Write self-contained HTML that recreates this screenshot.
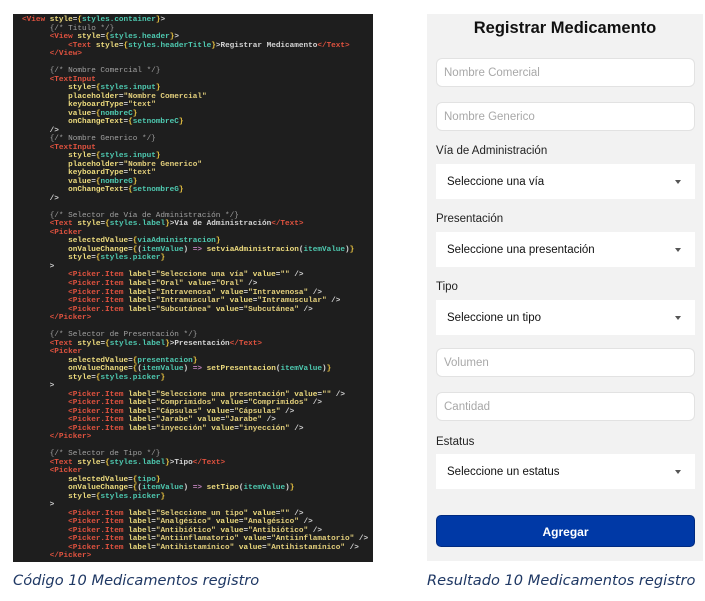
<!DOCTYPE html>
<html><head><meta charset="utf-8"><style>
*{margin:0;padding:0;box-sizing:border-box}
body{width:705px;height:601px;background:#fff;position:relative;overflow:hidden;font-family:"Liberation Sans",sans-serif}
#code{position:absolute;left:13px;top:14px;width:360px;height:548px;background:#1e1e1e}
pre{position:absolute;left:22px;top:16px;font-family:"Liberation Mono",monospace;font-size:7.7px;line-height:8.52px;color:#d4d4d4;font-weight:bold;white-space:pre}
.t{color:#e0523f}.a{color:#eedc7e}.s{color:#e3cf7c}.v{color:#4ec9b0}.c{color:#a0a0a0;font-weight:normal}.p{color:#e6c040}.k{color:#c586c0}
#app{position:absolute;left:427px;top:14px;width:276px;height:547px;background:#f2f2f2}
.title{position:absolute;left:0;width:100%;top:5px;text-align:center;font-weight:bold;font-size:16.5px;color:#111}
.in{position:absolute;left:9px;width:259px;height:29px;background:#fff;border:1px solid #e2e2e2;border-radius:6px;font-size:11.5px;color:#a8a8a8;padding-left:7px;line-height:28px}
.lb{position:absolute;left:9px;font-size:11.5px;color:#222}
.pk{position:absolute;left:9px;width:259px;height:35px;background:#fff;font-size:11.5px;color:#111;padding-left:11px;line-height:36px}
.pk:after{content:"";position:absolute;right:14px;top:16px;border-left:3.5px solid transparent;border-right:3.5px solid transparent;border-top:4px solid #555}
.btn{position:absolute;left:9px;top:501px;width:259px;height:32px;background:#0039a6;border-radius:5px;color:#fff;font-weight:bold;font-size:12px;text-align:center;line-height:32px;border:1px solid #002a80}
.cap{position:absolute;top:572px;font-style:italic;color:#1f3864;font-family:"DejaVu Sans","Liberation Sans",sans-serif;font-size:14.6px}
</style></head><body>
<div id="code"></div>
<pre><span class="t">&lt;View</span> <span class="a">style</span>=<span class="p">{</span><span class="v">styles.container</span><span class="p">}</span>&gt;
      <span class="c">{/* Titulo */}</span>
      <span class="t">&lt;View</span> <span class="a">style</span>=<span class="p">{</span><span class="v">styles.header</span><span class="p">}</span>&gt;
          <span class="t">&lt;Text</span> <span class="a">style</span>=<span class="p">{</span><span class="v">styles.headerTitle</span><span class="p">}</span>&gt;Registrar Medicamento<span class="t">&lt;/Text&gt;</span>
      <span class="t">&lt;/View&gt;</span>

      <span class="c">{/* Nombre Comercial */}</span>
      <span class="t">&lt;TextInput</span>
          <span class="a">style</span>=<span class="p">{</span><span class="v">styles.input</span><span class="p">}</span>
          <span class="a">placeholder</span>=<span class="s">"Nombre Comercial"</span>
          <span class="a">keyboardType</span>=<span class="s">"text"</span>
          <span class="a">value</span>=<span class="p">{</span><span class="v">nombreC</span><span class="p">}</span>
          <span class="a">onChangeText</span>=<span class="p">{</span><span class="v">setnombreC</span><span class="p">}</span>
      /&gt;
      <span class="c">{/* Nombre Generico */}</span>
      <span class="t">&lt;TextInput</span>
          <span class="a">style</span>=<span class="p">{</span><span class="v">styles.input</span><span class="p">}</span>
          <span class="a">placeholder</span>=<span class="s">"Nombre Generico"</span>
          <span class="a">keyboardType</span>=<span class="s">"text"</span>
          <span class="a">value</span>=<span class="p">{</span><span class="v">nombreG</span><span class="p">}</span>
          <span class="a">onChangeText</span>=<span class="p">{</span><span class="v">setnombreG</span><span class="p">}</span>
      /&gt;

      <span class="c">{/* Selector de Vía de Administración */}</span>
      <span class="t">&lt;Text</span> <span class="a">style</span>=<span class="p">{</span><span class="v">styles.label</span><span class="p">}</span>&gt;Vía de Administración<span class="t">&lt;/Text&gt;</span>
      <span class="t">&lt;Picker</span>
          <span class="a">selectedValue</span>=<span class="p">{</span><span class="v">viaAdministracion</span><span class="p">}</span>
          <span class="a">onValueChange</span>=<span class="p">{</span>(<span class="v">itemValue</span>) <span class="k">=&gt;</span> <span class="a">setviaAdministracion</span>(<span class="v">itemValue</span>)<span class="p">}</span>
          <span class="a">style</span>=<span class="p">{</span><span class="v">styles.picker</span><span class="p">}</span>
      &gt;
          <span class="t">&lt;Picker.Item</span> <span class="a">label</span>=<span class="s">"Seleccione una vía"</span> <span class="a">value</span>=<span class="s">""</span> /&gt;
          <span class="t">&lt;Picker.Item</span> <span class="a">label</span>=<span class="s">"Oral"</span> <span class="a">value</span>=<span class="s">"Oral"</span> /&gt;
          <span class="t">&lt;Picker.Item</span> <span class="a">label</span>=<span class="s">"Intravenosa"</span> <span class="a">value</span>=<span class="s">"Intravenosa"</span> /&gt;
          <span class="t">&lt;Picker.Item</span> <span class="a">label</span>=<span class="s">"Intramuscular"</span> <span class="a">value</span>=<span class="s">"Intramuscular"</span> /&gt;
          <span class="t">&lt;Picker.Item</span> <span class="a">label</span>=<span class="s">"Subcutánea"</span> <span class="a">value</span>=<span class="s">"Subcutánea"</span> /&gt;
      <span class="t">&lt;/Picker&gt;</span>

      <span class="c">{/* Selector de Presentación */}</span>
      <span class="t">&lt;Text</span> <span class="a">style</span>=<span class="p">{</span><span class="v">styles.label</span><span class="p">}</span>&gt;Presentación<span class="t">&lt;/Text&gt;</span>
      <span class="t">&lt;Picker</span>
          <span class="a">selectedValue</span>=<span class="p">{</span><span class="v">presentacion</span><span class="p">}</span>
          <span class="a">onValueChange</span>=<span class="p">{</span>(<span class="v">itemValue</span>) <span class="k">=&gt;</span> <span class="a">setPresentacion</span>(<span class="v">itemValue</span>)<span class="p">}</span>
          <span class="a">style</span>=<span class="p">{</span><span class="v">styles.picker</span><span class="p">}</span>
      &gt;
          <span class="t">&lt;Picker.Item</span> <span class="a">label</span>=<span class="s">"Seleccione una presentación"</span> <span class="a">value</span>=<span class="s">""</span> /&gt;
          <span class="t">&lt;Picker.Item</span> <span class="a">label</span>=<span class="s">"Comprimidos"</span> <span class="a">value</span>=<span class="s">"Comprimidos"</span> /&gt;
          <span class="t">&lt;Picker.Item</span> <span class="a">label</span>=<span class="s">"Cápsulas"</span> <span class="a">value</span>=<span class="s">"Cápsulas"</span> /&gt;
          <span class="t">&lt;Picker.Item</span> <span class="a">label</span>=<span class="s">"Jarabe"</span> <span class="a">value</span>=<span class="s">"Jarabe"</span> /&gt;
          <span class="t">&lt;Picker.Item</span> <span class="a">label</span>=<span class="s">"inyección"</span> <span class="a">value</span>=<span class="s">"inyección"</span> /&gt;
      <span class="t">&lt;/Picker&gt;</span>

      <span class="c">{/* Selector de Tipo */}</span>
      <span class="t">&lt;Text</span> <span class="a">style</span>=<span class="p">{</span><span class="v">styles.label</span><span class="p">}</span>&gt;Tipo<span class="t">&lt;/Text&gt;</span>
      <span class="t">&lt;Picker</span>
          <span class="a">selectedValue</span>=<span class="p">{</span><span class="v">tipo</span><span class="p">}</span>
          <span class="a">onValueChange</span>=<span class="p">{</span>(<span class="v">itemValue</span>) <span class="k">=&gt;</span> <span class="a">setTipo</span>(<span class="v">itemValue</span>)<span class="p">}</span>
          <span class="a">style</span>=<span class="p">{</span><span class="v">styles.picker</span><span class="p">}</span>
      &gt;
          <span class="t">&lt;Picker.Item</span> <span class="a">label</span>=<span class="s">"Seleccione un tipo"</span> <span class="a">value</span>=<span class="s">""</span> /&gt;
          <span class="t">&lt;Picker.Item</span> <span class="a">label</span>=<span class="s">"Analgésico"</span> <span class="a">value</span>=<span class="s">"Analgésico"</span> /&gt;
          <span class="t">&lt;Picker.Item</span> <span class="a">label</span>=<span class="s">"Antibiótico"</span> <span class="a">value</span>=<span class="s">"Antibiótico"</span> /&gt;
          <span class="t">&lt;Picker.Item</span> <span class="a">label</span>=<span class="s">"Antiinflamatorio"</span> <span class="a">value</span>=<span class="s">"Antiinflamatorio"</span> /&gt;
          <span class="t">&lt;Picker.Item</span> <span class="a">label</span>=<span class="s">"Antihistamínico"</span> <span class="a">value</span>=<span class="s">"Antihistamínico"</span> /&gt;
      <span class="t">&lt;/Picker&gt;</span></pre>
<div id="app">
<div class="title">Registrar Medicamento</div>
<div class="in" style="top:44px">Nombre Comercial</div>
<div class="in" style="top:88px">Nombre Generico</div>
<div class="lb" style="top:131px">Vía de Administración</div>
<div class="pk" style="top:150px">Seleccione una vía</div>
<div class="lb" style="top:199px">Presentación</div>
<div class="pk" style="top:218px">Seleccione una presentación</div>
<div class="lb" style="top:267px">Tipo</div>
<div class="pk" style="top:286px">Seleccione un tipo</div>
<div class="in" style="top:334px">Volumen</div>
<div class="in" style="top:378px">Cantidad</div>
<div class="lb" style="top:422px">Estatus</div>
<div class="pk" style="top:440px">Seleccione un estatus</div>
<div class="btn">Agregar</div>
</div>
<div class="cap" style="left:13px">Código 10 Medicamentos registro</div>
<div class="cap" style="left:427px">Resultado 10 Medicamentos registro</div>
</body></html>
